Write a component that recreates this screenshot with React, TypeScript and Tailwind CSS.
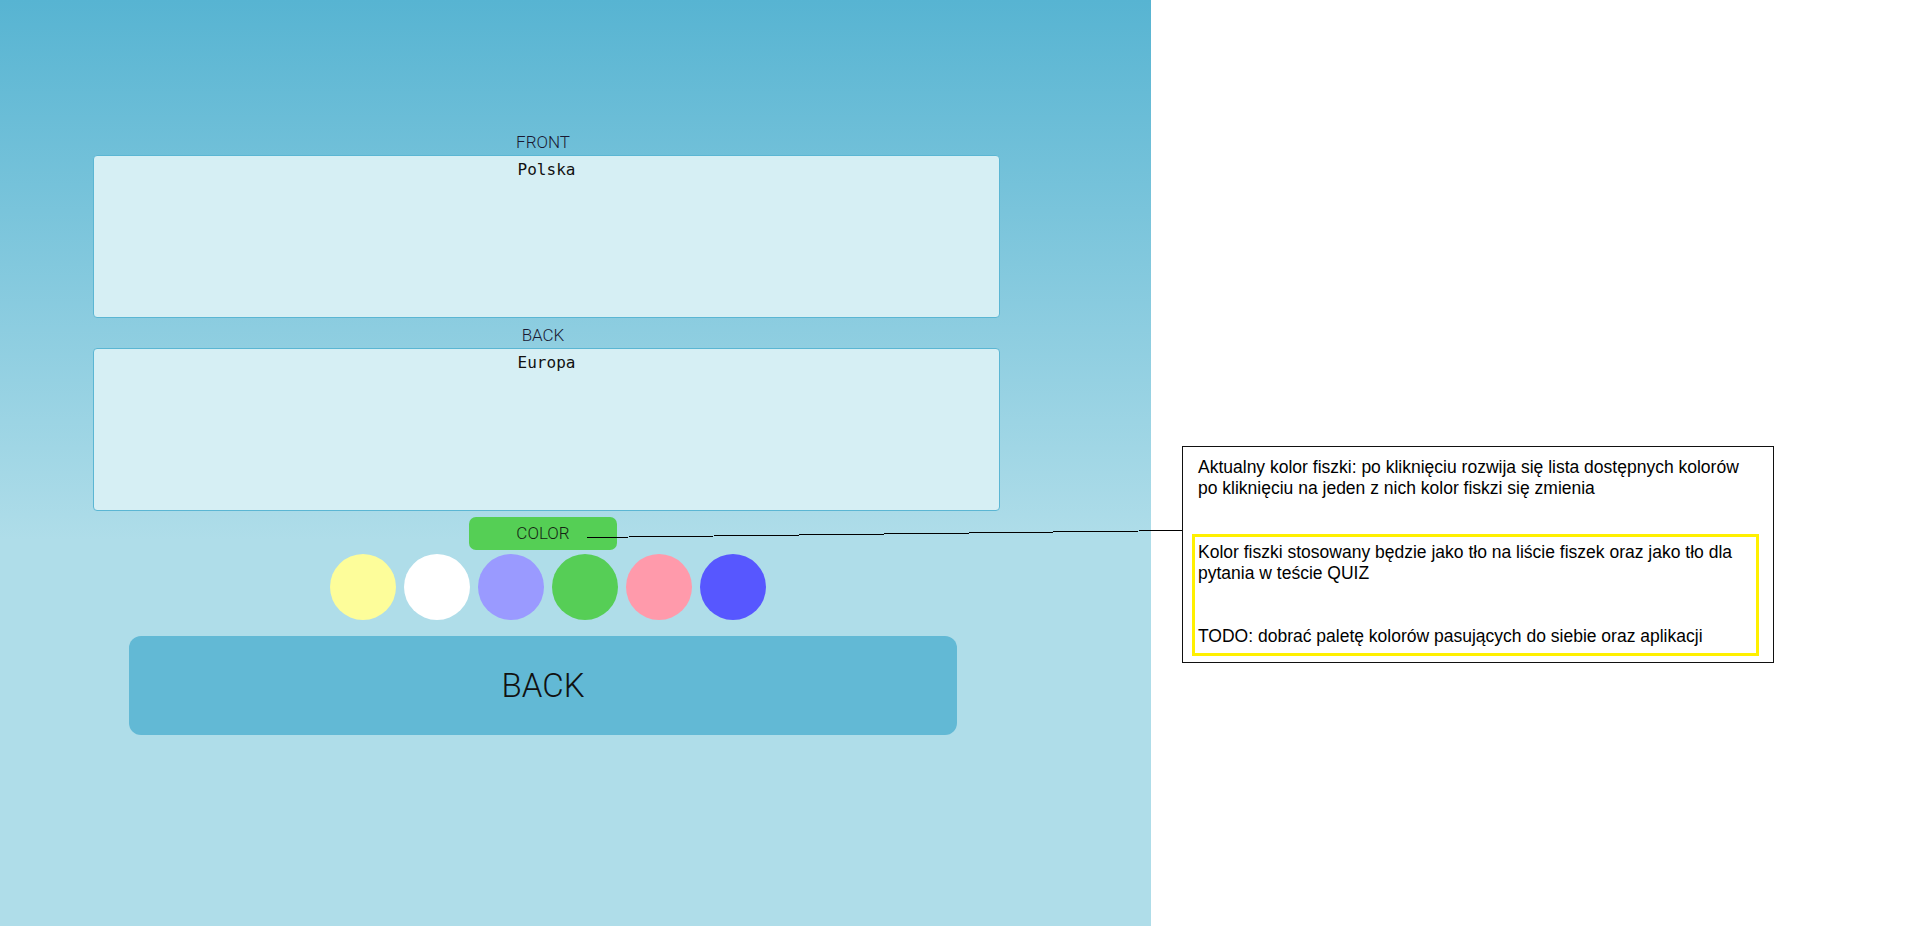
import React from 'react'

const swatches = ['#fdfd9a', '#ffffff', '#9a9aff', '#56ce56', '#ff9aab', '#5757ff']

export default function App() {
  return (
    <div className="relative flex h-[926px] w-full overflow-hidden bg-white">
      {/* left: card editor */}
      <div className="w-[1151px] h-full bg-[linear-gradient(to_bottom,#57b4d2_0px,#afdde9_540px,#afdde9_926px)] pl-[93px] pt-[130px]">
        <div className="flex w-[907px] flex-col">
          <div className="pr-[7px] text-center font-['Roboto',sans-serif] text-[17px] font-light leading-[24px] text-[#1a1a33]">
            FRONT
          </div>
          <textarea
            defaultValue="Polska"
            className="mt-[1px] h-[163px] w-full resize-none rounded-[4px] border border-[#5bb6d3] bg-[#d6eff4] px-[2px] pt-[2px] text-center font-['DejaVu_Sans_Mono',monospace] text-[16px] text-[#111] outline-none"
          />
          <div className="mt-[5px] pr-[7px] text-center font-['Roboto',sans-serif] text-[17px] font-light leading-[25px] text-[#1a1a33]">
            BACK
          </div>
          <textarea
            defaultValue="Europa"
            className="h-[163px] w-full resize-none rounded-[4px] border border-[#5bb6d3] bg-[#d6eff4] px-[2px] pt-[2px] text-center font-['DejaVu_Sans_Mono',monospace] text-[16px] text-[#111] outline-none"
          />
          <div className="mt-[6px] flex justify-center pr-[7px]">
            <button className="flex h-[33px] w-[148px] items-center justify-center rounded-[7px] bg-[#55cf55] font-['Roboto',sans-serif] text-[17px] font-light text-[#142414]">
              COLOR
            </button>
          </div>
          <div className="mt-[4px] flex justify-center gap-[8px] pl-[2px]">
            {swatches.map((c) => (
              <div key={c} className="h-[66px] w-[66px] rounded-full" style={{ backgroundColor: c }} />
            ))}
          </div>
          <button className="ml-[36px] mt-[16px] flex h-[99px] w-[828px] items-center justify-center rounded-[12px] bg-[#62b9d5] font-['Roboto',sans-serif] text-[33px] font-light text-[#111]">
            BACK
          </button>
        </div>
      </div>

      {/* right: annotation */}
      <div className="flex-1 pl-[31px] pt-[446px]">
        <div className="h-[217px] w-[592px] border border-[#111] pl-[15px] pt-[10px] font-['Liberation_Sans',Arial,sans-serif] text-[17.5px] leading-[21px] text-black">
          <div className="whitespace-nowrap">Aktualny kolor fiszki: po kliknięciu rozwija się lista dostępnych kolorów</div>
          <div className="whitespace-nowrap">po kliknięciu na jeden z nich kolor fiskzi się zmienia</div>
          <div className="-ml-[6px] mt-[35px] h-[122px] w-[567px] border-[3px] border-[#fff000] pl-[3px] pt-[5px]">
            <div className="whitespace-nowrap">Kolor fiszki stosowany będzie jako tło na liście fiszek oraz jako tło dla</div>
            <div className="whitespace-nowrap">pytania w teście QUIZ</div>
            <div className="h-[42px]" />
            <div className="whitespace-nowrap">TODO: dobrać paletę kolorów pasujących do siebie oraz aplikacji</div>
          </div>
        </div>
      </div>

      {/* connector from COLOR to the note */}
      <svg className="pointer-events-none absolute left-0 top-0" width="1914" height="926" shapeRendering="crispEdges">
        <line x1="587" y1="537.5" x2="1182" y2="530.5" stroke="#000" strokeWidth="1" />
      </svg>
    </div>
  )
}
